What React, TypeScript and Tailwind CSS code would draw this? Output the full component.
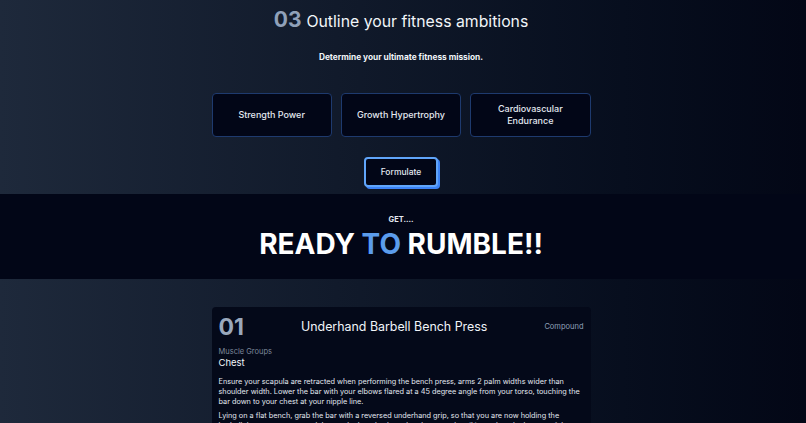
import React from "react";

const goals = ["Strength Power", "Growth Hypertrophy", "Cardiovascular Endurance"];

function GoalButton({ label }: { label: string }) {
  return (
    <button className="flex h-[44px] items-center justify-center rounded-[4px] border border-[#1e3a6e] bg-[#020617] px-[12px] text-center text-[9px] font-medium leading-[12px] text-slate-200">
      {label}
    </button>
  );
}

export default function App() {
  return (
    <div className="min-h-screen w-full overflow-hidden bg-gradient-to-r from-[#1e293b] to-[#030716] pr-[4px] font-['Inter',sans-serif] text-white">
      {/* goal selection */}
      <section className="flex h-[194px] flex-col items-center">
        <h2 className="mt-[6px] flex items-baseline gap-[5px] leading-[28px]">
          <span className="text-[21px] font-bold text-slate-400">03</span>
          <span className="text-[15.8px] font-normal text-slate-100">Outline your fitness ambitions</span>
        </h2>
        <p className="mt-[15px] text-[8.3px] font-bold leading-[12px] text-slate-100">
          Determine your ultimate fitness mission.
        </p>
        <div className="mt-[30px] grid w-[379px] grid-cols-3 gap-[9px]">
          {goals.map((g) => (
            <GoalButton key={g} label={g} />
          ))}
        </div>
        <button className="mt-[20px] flex h-[30px] w-[74px] items-center justify-center rounded-[4px] border-2 border-[#60a5fa] bg-[#020617] text-[8.5px] font-medium text-slate-200 shadow-[2px_2px_0_0_#3b82f6]">
          Formulate
        </button>
      </section>

      {/* banner */}
      <section className="-mr-[4px] flex h-[85px] flex-col items-center justify-center bg-[#020617] pr-[4px]">
        <p className="mt-[2px] text-[7.5px] font-bold leading-[10px] text-slate-200">GET....</p>
        <h1 className="mt-[3px] text-[28px] font-bold leading-[32px] text-white">
          READY <span className="text-[#5b9cec]">TO</span> RUMBLE!!
        </h1>
      </section>

      {/* workout list */}
      <section className="flex justify-center pt-[28px]">
        <article className="w-[379px] rounded-t-[4px] bg-[#040919] px-[7px] pt-[6px] pb-[10px]">
          <header className="flex items-center justify-between">
            <span className="text-[23px] font-bold leading-[28px] text-[#9aa8bc]">01</span>
            <h3 className="text-center text-[12.4px] font-normal leading-[20px] text-slate-100">
              Underhand Barbell Bench Press
            </h3>
            <span className="text-right text-[7.5px] text-slate-400">Compound</span>
          </header>
          <div className="mt-[6px]">
            <p className="text-[7.5px] leading-[10px] text-[#7c879a]">Muscle Groups</p>
            <p className="text-[9.5px] leading-[12px] text-slate-100">Chest</p>
          </div>
          <div className="mt-[8px] flex flex-col gap-[5px] text-[7.3px] leading-[9.8px] text-slate-200">
            <p>
              Ensure your scapula are retracted when performing the bench press, arms 2 palm widths wider than
              shoulder width. Lower the bar with your elbows flared at a 45 degree angle from your torso, touching the
              bar down to your chest at your nipple line.
            </p>
            <p>
              Lying on a flat bench, grab the bar with a reversed underhand grip, so that you are now holding the
              barbell the wrong way round. Lower the bar slowly and under control until it touches the bottom of the
              chest, then press it back up to the start.
            </p>
          </div>
        </article>
      </section>
    </div>
  );
}
